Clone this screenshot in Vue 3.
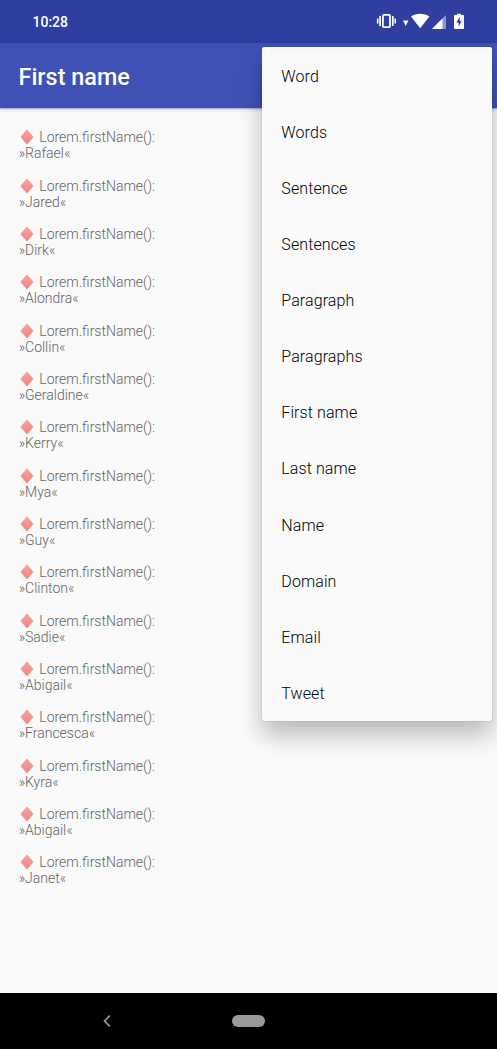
<script setup>
const names = ['Rafael', 'Jared', 'Dirk', 'Alondra', 'Collin', 'Geraldine', 'Kerry', 'Mya', 'Guy', 'Clinton', 'Sadie', 'Abigail', 'Francesca', 'Kyra', 'Abigail', 'Janet']
const menu = ['Word', 'Words', 'Sentence', 'Sentences', 'Paragraph', 'Paragraphs', 'First name', 'Last name', 'Name', 'Domain', 'Email', 'Tweet']
</script>

<template>
  <div class="screen">
    <header class="status">
      <span class="clock">10:28</span>
      <svg class="icons" width="90" height="20" viewBox="0 0 90 20">
        <g fill="none" stroke="#fff">
          <rect x="7.9" y="3.9" width="7.1" height="12.2" rx=".8" stroke-width="1.8" />
          <path d="M5.1 5.1v9.8M17.8 5.1v9.8" stroke-width="1.7" />
          <path d="M2.7 7.4v5.2M20.2 7.4v5.2" stroke-width="1.6" />
        </g>
        <path d="M28 9.5h5.4l-2.7 5.5z" fill="#fff" />
        <path d="M36 5.6C41 1.9 49 1.9 54.4 5.6L45.2 17.2z" fill="#fff" />
        <path d="M57 18 71 4V18z" fill="#8c95cc" />
        <path d="M57 18 67.5 7.5V18z" fill="#fff" />
        <path d="M80 4h2V2.7h4V4h2q1 0 1 1v12q0 1-1 1h-8q-1 0-1-1V5q0-1 1-1z" fill="#fff" />
        <path d="M84.7 5.7 81.5 11.5h2.1v4.3l3-5.7h-1.9z" fill="#303f9f" />
      </svg>
    </header>
    <header class="bar">First name</header>
    <main class="content">
      <div v-for="(n, i) in names" :key="i" class="entry">
        <div class="line">
          <svg class="gem" width="14" height="16" viewBox="0 0 14 16">
            <defs>
              <linearGradient id="gem-fill" x2="0" y2="1">
                <stop stop-color="#f8a39e" /><stop offset="1" stop-color="#ee8580" />
              </linearGradient>
            </defs>
            <path d="M7 .7 13.3 8 7 15.3.7 8z" fill="url(#gem-fill)" stroke="#f0928e" stroke-width=".5" stroke-linejoin="round" />
          </svg><span>Lorem.firstName():</span>
        </div>
        <div class="line">»{{ n }}«</div>
      </div>
    </main>
    <nav class="navbar">
      <svg class="back" width="10" height="14" viewBox="0 0 10 14"><path d="M7.8 1.7 2.5 7l5.3 5.3" fill="none" stroke="#999" stroke-width="1.7" /></svg>
      <span class="pill"></span>
    </nav>
    <div class="menu">
      <div v-for="m in menu" :key="m" class="item"><span>{{ m }}</span></div>
    </div>
  </div>
</template>

<style>
body { margin: 0; background: #fafafa; }
</style>
<style scoped>
.screen { position: relative; width: 497px; height: 1049px; overflow: hidden; background: #fafafa; display: flex; flex-direction: column; font-family: Roboto, sans-serif; }
.status { height: 43px; flex: none; background: #303f9f; display: flex; justify-content: space-between; align-items: center; box-sizing: border-box; padding: 0 32px 0 32.5px; color: #fff; }
.clock { font-size: 14px; font-weight: 500; line-height: 20px; }
.icons { margin-top: -1px; }
.bar { height: 65px; flex: none; background: #3f51b5; color: #fff; font-size: 23.4px; font-weight: 500; line-height: 68px; padding-left: 18.5px; box-shadow: 0 1px 1px rgba(63, 81, 181, .35), 0 2px 4px rgba(0, 0, 0, .12); }
.content { flex: 1; padding: 21.4px 19px 0 18.7px; color: #646464; font-size: 14px; font-weight: 350; }
.entry { height: 48.33px; }
.line { height: 16.1px; line-height: 16.1px; display: flex; white-space: pre; }
.gem { margin: 0 5.3px 0 1.3px; flex: none; }
.navbar { height: 56px; flex: none; background: #000; display: flex; align-items: center; }
.back { margin-left: 102px; }
.pill { width: 33px; height: 12px; border-radius: 6px; background: #999; margin-left: 120px; }
.menu { position: absolute; left: 262px; top: 47px; width: 230px; height: 674px; border-radius: 2px; background: #fafafa; box-shadow: 0 0 1px rgba(0, 30, 130, .5), 0 14px 24px rgba(0, 0, 0, .26); }
.item { height: 56.14px; display: flex; align-items: center; padding-left: 19.3px; font-size: 16px; font-weight: 350; letter-spacing: .1px; color: #000; }
.item span { padding-top: 1.9px; }
</style>
